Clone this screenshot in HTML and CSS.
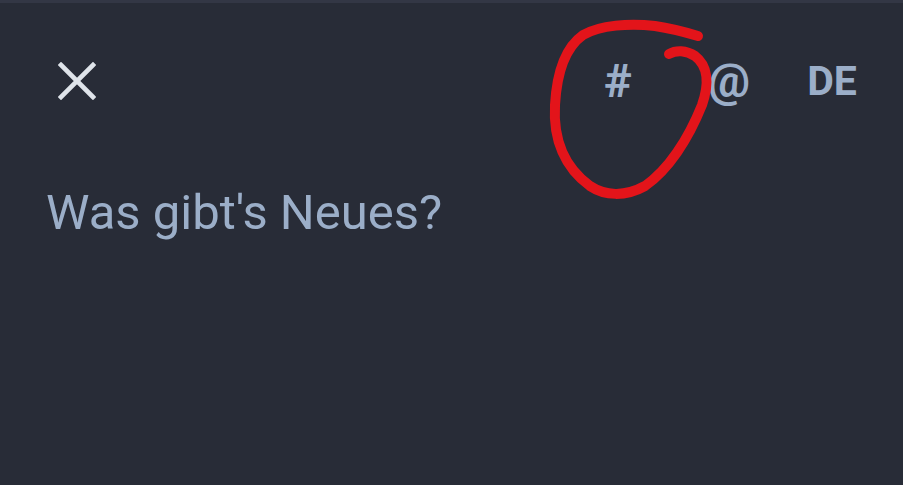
FILE: index.html
```html
<!DOCTYPE html>
<html lang="de">
<head>
<meta charset="utf-8">
<title>Neuer Beitrag</title>
<link rel="stylesheet" href="styles.css">
</head>
<body>
<div class="statusbar"></div>
<div class="compose">
  <header class="header">
    <button class="close" aria-label="Schließen">
      <svg viewBox="0 0 38 38" width="38" height="38"><path d="M3 3 L35 35 M35 3 L3 35" stroke="#dfe4ea" stroke-width="4.6" stroke-linecap="square" fill="none"/></svg>
    </button>
    <div class="actions">
      <span class="action hash">#</span>
      <span class="action at">@</span>
      <span class="action lang">DE</span>
    </div>
  </header>
  <div class="editor">Was gibt's Neues?</div>
</div>
<svg class="scribble" viewBox="0 0 903 485" width="903" height="485">
  <path d="M698 36 C 688 33, 675 29, 655 26 C 630 23, 600 25, 583 35 C 566 47, 557 70, 555 105 C 553 140, 565 168, 590 186 C 605 196, 625 197, 645 186 C 668 170, 688 140, 702 105 C 710 82, 707 65, 695 56 C 686 50, 676 50, 669 54" stroke="#e3141a" stroke-width="10" stroke-linecap="round" stroke-linejoin="round" fill="none"/>
</svg>
</body>
</html>
```
FILE: styles.css
```css
* { box-sizing: border-box; }
html, body { margin: 0; padding: 0; }
body {
  width: 903px;
  height: 485px;
  overflow: hidden;
  background: #282c37;
  font-family: Roboto, "Noto Sans", "Liberation Sans", sans-serif;
  position: relative;
}
.statusbar {
  height: 3px;
  background: #333745;
}
.header {
  height: 156px;
  display: flex;
  align-items: center;
  justify-content: space-between;
  padding: 0 0 0 58px;
}
.close {
  width: 38px;
  height: 38px;
  padding: 0;
  border: 0;
  background: none;
  display: flex;
}
.actions {
  display: flex;
  align-items: center;
}
.action {
  color: #9baec8;
  font-weight: 700;
  font-size: 41px;
  line-height: 48px;
  text-align: center;
}
.hash { width: 50px; font-size: 47px; margin-right: 61px; }
.at { width: 50px; font-size: 47px; margin-right: 52px; }
.lang { width: 52px; margin-right: 45px; }
.editor {
  padding: 24px 0 0 46px;
  color: #9baec8;
  font-size: 49px;
  line-height: 60px;
}
.scribble {
  position: absolute;
  left: 0;
  top: 0;
  pointer-events: none;
}
```
